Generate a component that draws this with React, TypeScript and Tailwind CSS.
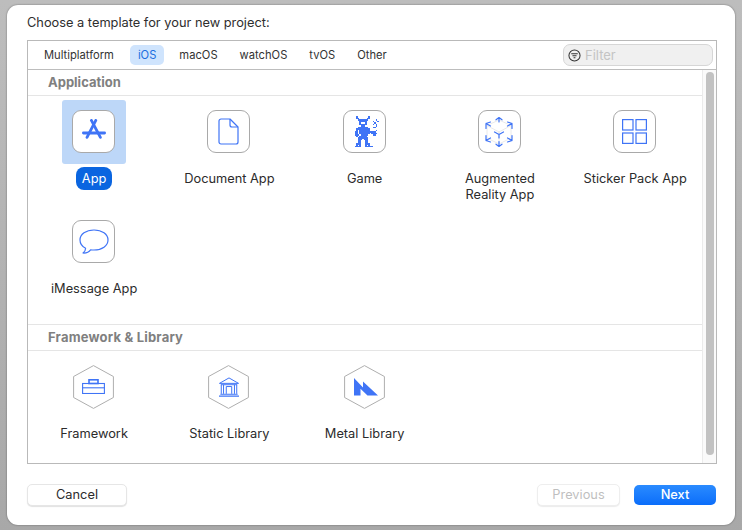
import React from 'react';

const BLUE = '#3f74f6';

const AppStoreIcon = () => (
  <svg className="mb-[5px]" width="24" height="20" viewBox="0 0 24 20" fill="none" stroke={BLUE} strokeWidth="2.8" strokeLinecap="round">
    <path d="M9.4 1.4 L18.4 18.4" />
    <path d="M13.8 1.4 L5 18.4" />
    <path d="M1.4 14 H22.6" />
  </svg>
);

const DocIcon = () => (
  <svg width="21" height="27" viewBox="0 0 21 27" fill="none" stroke={BLUE} strokeWidth="1.2" strokeLinejoin="round">
    <path d="M3 1 H12 L20 9 V24 a2 2 0 0 1 -2 2 H3 a2 2 0 0 1 -2 -2 V3 a2 2 0 0 1 2 -2 Z" />
    <path d="M12 1 V7 a2 2 0 0 0 2 2 H20" />
  </svg>
);

const GameIcon = () => {
  const px = [
    '..#.......#......',
    '..##.....##......',
    '...#######.....#.',
    '....#####....#..#',
    '....#...#.....#..',
    '....#####....#.#.',
    '.....###.......#.',
    '...#######...##..',
    '..#########......',
    '..#.#######....#.',
    '.##.###########..',
    '.##.#######.####.',
    '.###.#####...##..',
    '..#.#####........',
    '...#######.......',
    '...###.###.......',
    '...##...##.......',
    '...##...##.......',
    '..###...###......',
    '..#.#...#.#......',
    '.####...#####....',
  ];
  return (
    <svg className="ml-[4px]" width="25.5" height="31.5" viewBox="0 0 17 21" fill={BLUE} shapeRendering="crispEdges">
      {px.map((row, y) =>
        row.split('').map((c, x) => (c === '#' ? <rect key={`${x}-${y}`} x={x} y={y} width="1" height="1" /> : null))
      )}
    </svg>
  );
};

const ArIcon = () => (
  <svg width="30" height="32" viewBox="0 0 30 32" fill="none" stroke={BLUE} strokeWidth="1.2" strokeLinecap="round" strokeLinejoin="round">
    <path d="M15 16 L15 27 M15 16 L3 9.5 M15 16 L27 9.5 M15 4 L3 9.5 M15 4 L27 9.5 M3 9.5 V22 M27 9.5 V22 M3 22 L15 28 M27 22 L15 28" stroke="#e4e4e4" strokeWidth="0.8" />
    <path d="M15 1.5 V6 M12 3.8 L15 1.5 L18 3.8" />
    <path d="M15 25.5 V30.5 M12 28.2 L15 30.5 L18 28.2" />
    <path d="M10.5 16 L15 18.5 L19.5 16 M15 18.5 V22" />
    <path d="M2 12.5 V7.5 L6.5 6 M2 7.5 L6.5 10" />
    <path d="M28 12.5 V7.5 L23.5 6 M28 7.5 L23.5 10" />
    <path d="M2 19.5 V24.5 L6.5 26 M2 24.5 L6.5 22" />
    <path d="M28 19.5 V24.5 L23.5 26 M28 24.5 L23.5 22" />
  </svg>
);

const StickerIcon = () => (
  <svg width="25" height="25" viewBox="0 0 25 25" fill="none" stroke={BLUE} strokeWidth="1.2">
    <rect x="0.6" y="0.6" width="10.4" height="10.4" />
    <rect x="14" y="0.6" width="10.4" height="10.4" />
    <rect x="0.6" y="14" width="10.4" height="10.4" />
    <rect x="14" y="14" width="10.4" height="10.4" />
  </svg>
);

const BubbleIcon = () => (
  <svg width="30" height="26" viewBox="0 0 30 26" fill="none" stroke={BLUE} strokeWidth="1.2" strokeLinejoin="round">
    <path d="M15 1 C7 1 1 5.2 1 11 C1 14.6 3.3 17.6 6.6 19.3 C6.6 21 5.6 22.8 4 24 C7 24.2 10 23 11.6 20.8 C12.7 21 13.8 21 15 21 C23 21 29 16.8 29 11 C29 5.2 23 1 15 1 Z" />
  </svg>
);

const Hexagon: React.FC<{ children: React.ReactNode }> = ({ children }) => (
  <div className="relative flex h-[44px] w-[41px] items-center justify-center">
    <svg className="absolute inset-0" width="41" height="44" viewBox="0 0 41 44" fill="none" stroke="#aeaeae" strokeWidth="1">
      <path d="M20.5 0.6 L40.4 11.5 V32.5 L20.5 43.4 L0.6 32.5 V11.5 Z" />
    </svg>
    <div className="relative flex">{children}</div>
  </div>
);

const CaseIcon = () => (
  <svg className="mb-[2px]" width="23" height="15" viewBox="0 0 23 15" fill="none" stroke={BLUE} strokeWidth="1.1">
    <rect x="0.6" y="4.5" width="21.8" height="10" />
    <path d="M0.6 8.8 H22.4" />
    <rect x="7" y="0.8" width="9" height="3.7" strokeWidth="1.6" />
  </svg>
);

const BankIcon = () => (
  <svg width="22" height="20" viewBox="0 0 24 22" fill="none" stroke={BLUE} strokeWidth="1.1">
    <path d="M12 1 L22.5 7 H1.5 Z" strokeWidth="1.1" />
    <path d="M3 8.5 H21 M3.5 8.5 V18.5 M6 8.5 V18.5 M18 8.5 V18.5 M20.5 8.5 V18.5 M9 18.5 V10.5 H15 V18.5" />
    <path d="M2.5 19 H21.5 M1 21 H23" strokeWidth="1.2" />
  </svg>
);

const MetalIcon = () => (
  <svg className="ml-[3px]" width="24" height="18" viewBox="0 0 24 18" fill={BLUE}>
    <path d="M0 0 L9 9.5 V3.5 L24 17.5 H13.5 L6.5 10.8 V17.5 H0 Z" />
  </svg>
);

type Template = { label: string[]; icon: React.ReactNode; selected?: boolean; hex?: boolean };

const appTemplates: Template[] = [
  { label: ['App'], icon: <AppStoreIcon />, selected: true },
  { label: ['Document App'], icon: <DocIcon /> },
  { label: ['Game'], icon: <GameIcon /> },
  { label: ['Augmented', 'Reality App'], icon: <ArIcon /> },
  { label: ['Sticker Pack App'], icon: <StickerIcon /> },
  { label: ['iMessage App'], icon: <BubbleIcon /> },
];

const libTemplates: Template[] = [
  { label: ['Framework'], icon: <CaseIcon />, hex: true },
  { label: ['Static Library'], icon: <BankIcon />, hex: true },
  { label: ['Metal Library'], icon: <MetalIcon />, hex: true },
];

const TemplateCell: React.FC<{ t: Template }> = ({ t }) => (
  <div className="flex flex-col items-center">
    <div className={`h-[64px] w-[64px] rounded-[3px] ${t.selected ? 'bg-[#bdd7f8]' : ''}`}>
      {t.hex ? (
        <div className="flex h-[64px] items-center pl-[11px]">
          <Hexagon>{t.icon}</Hexagon>
        </div>
      ) : (
        <div className="ml-[10px] mt-[10px] flex h-[43px] w-[43px] items-center justify-center rounded-[9px] border border-[#a9a9a9] bg-white">{t.icon}</div>
      )}
    </div>
    <div className="mt-[3px] text-center text-[12.8px] leading-[16px] text-[#2b2b2b]">
      {t.selected ? (
        <span className="flex h-[23px] items-center rounded-[8px] bg-[#0a65e0] px-[6px] text-white">{t.label[0]}</span>
      ) : (
        <div className="pt-[3.5px]">
          {t.label.map((l) => (
            <div key={l} className="whitespace-nowrap">{l}</div>
          ))}
        </div>
      )}
    </div>
  </div>
);

const tabs = ['Multiplatform', 'iOS', 'macOS', 'watchOS', 'tvOS', 'Other'];

export default function App() {
  return (
    <div className="h-[530px] w-[742px] overflow-hidden bg-gradient-to-b from-[#bdbdbd] to-[#a8a8a8] px-[7px] pt-[5px] font-['Inter','Liberation_Sans',sans-serif]">
      <div className="flex h-[520px] w-[728px] flex-col rounded-[11px] bg-white pl-[20px] pr-[18px] shadow-[0_0_2px_rgba(0,0,0,0.45)]">
        <div className="flex h-[35px] items-center pt-[1px] text-[12.8px] text-[#2e2e2e]">Choose a template for your new project:</div>

        <div className="flex h-[424px] w-[690px] flex-col border border-[#b9b9b9]">
          <div className="flex h-[29px] shrink-0 items-center justify-between border-b border-[#bdbdbd] pl-[8px] pr-[3px]">
            <div className="flex items-center gap-[6px] text-[11.2px] text-[#333333]">
              {tabs.map((tab) => (
                <span key={tab} className={`flex h-[20px] items-center rounded-[5px] px-[8px] ${tab === 'iOS' ? 'ml-[2px] mr-[1px] bg-[#cfe4fd] text-[#1a6fe0]' : ''}`}>{tab}</span>
              ))}
            </div>
            <div className="flex h-[22px] w-[150px] items-center gap-[4px] rounded-[7px] border border-[#d6d6d6] bg-[#f0f0f0] pl-[4px]">
              <svg width="13" height="13" viewBox="0 0 14 14" fill="none" stroke="#333333" strokeWidth="1.1">
                <circle cx="7" cy="7" r="6" />
                <path d="M3.5 5 H10.5 M4.8 7.2 H9.2 M6 9.4 H8" />
              </svg>
              <span className="pt-[1px] text-[13px] text-[#c4c4c4]">Filter</span>
            </div>
          </div>

          <div className="flex min-h-0 flex-1">
            <div className="min-w-0 flex-1">
              <div className="flex h-[26px] items-center border-b border-[#e5e5e5] pl-[20px] text-[13px] font-bold text-[#808080]">Application</div>
              <div className="-ml-[1.5px] grid grid-cols-[repeat(5,135.25px)] pb-[4px] pt-[4px]">
                {appTemplates.map((t, i) => (
                  <div key={i} className="h-[110px]">
                    <TemplateCell t={t} />
                  </div>
                ))}
              </div>
              <div className="flex h-[27px] items-center border-y border-[#e5e5e5] pl-[20px] text-[13px] font-bold tracking-[0.2px] text-[#808080]">Framework &amp; Library</div>
              <div className="-ml-[1.5px] grid grid-cols-[repeat(5,135.25px)] pt-[4px]">
                {libTemplates.map((t, i) => (
                  <TemplateCell key={i} t={t} />
                ))}
              </div>
            </div>
            <div className="flex w-[14px] shrink-0 justify-center border-l border-[#ebebeb] bg-[#fafafa] pt-[2px]">
              <div className="h-[383px] w-[8px] rounded-full bg-[#c2c2c2]" />
            </div>
          </div>
        </div>

        <div className="mt-[20px] flex items-center justify-between text-[12.8px]">
          <button className="h-[22px] w-[100px] rounded-[5px] border border-[#e6e6e6] bg-white text-[#2b2b2b] shadow-[0_1px_1px_rgba(0,0,0,0.12)]">Cancel</button>
          <div className="flex items-center gap-[14px] pr-[1px]">
            <button className="h-[22px] w-[83px] rounded-[5px] border border-[#eeeeee] bg-white text-[#bfbfbf] shadow-[0_1px_1px_rgba(0,0,0,0.08)]">Previous</button>
            <button className="h-[20px] w-[82px] rounded-[5px] bg-gradient-to-b from-[#2a8bff] to-[#0a6dfa] font-medium text-white">Next</button>
          </div>
        </div>
      </div>
    </div>
  );
}
